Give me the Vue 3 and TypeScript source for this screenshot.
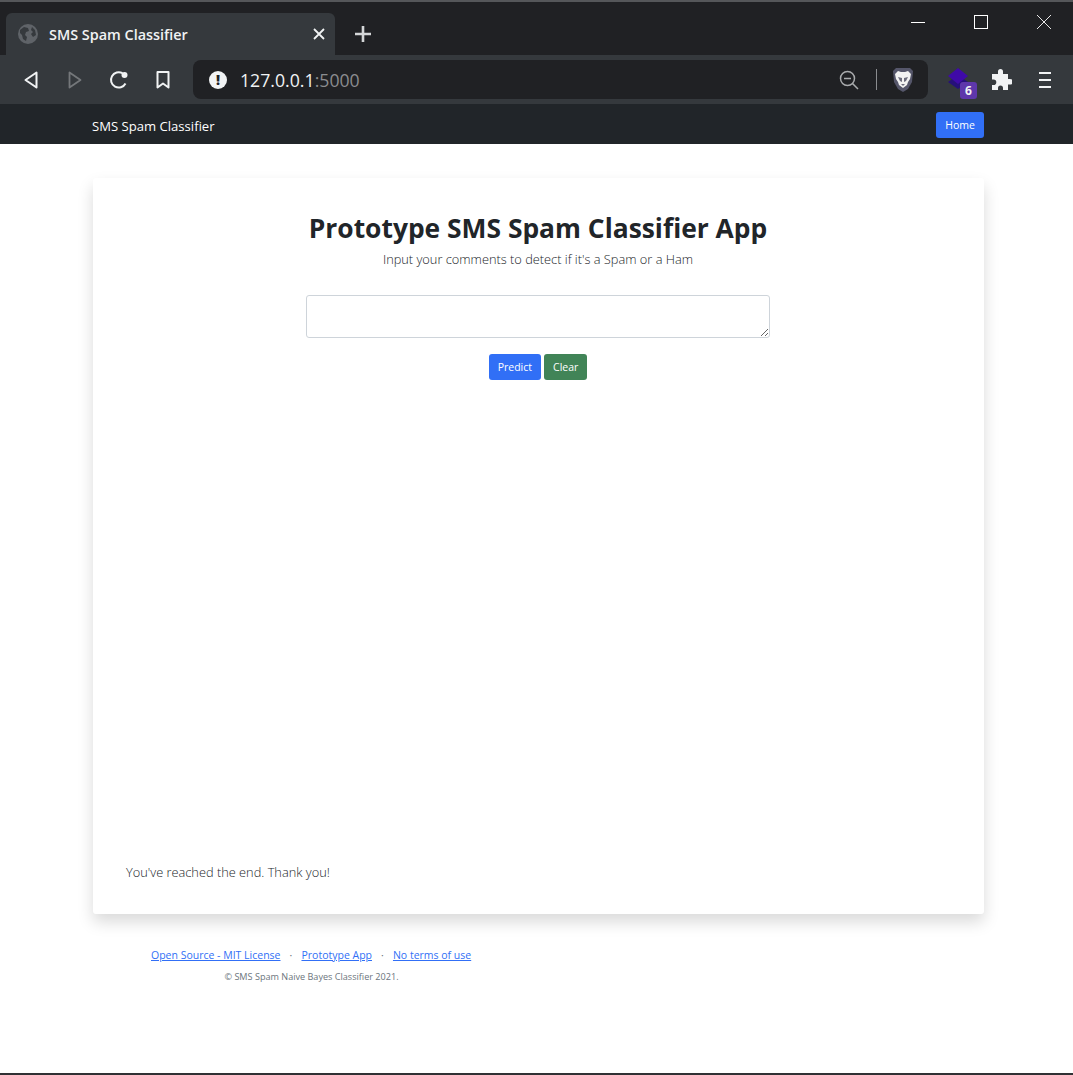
<template>
  <div class="page">
    <!-- browser chrome -->
    <div class="tab-strip">
      <div class="tab">
        <svg class="globe" viewBox="0 0 20 20" width="20" height="20">
          <circle cx="10" cy="10" r="10" fill="#5f6368" />
          <path d="M2 6l4-3 4 1 1 3-3 1-1 3 2 2-1 4-3-2-1-4-2-2zM14 3l3 3 1 5-3 2-2-3 2-2-2-2z" fill="#35393d" />
        </svg>
        <span class="tab-title">SMS Spam Classifier</span>
        <svg class="tab-close" viewBox="0 0 12 12" width="12" height="12">
          <path d="M1 1l10 10M11 1L1 11" stroke="#f1f3f4" stroke-width="1.8" />
        </svg>
      </div>
      <svg class="new-tab" viewBox="0 0 16 16" width="16" height="16">
        <path d="M8 0v16M0 8h16" stroke="#d4d6d8" stroke-width="2.6" />
      </svg>
      <div class="win-controls">
        <svg viewBox="0 0 14 14" width="14" height="14"><path d="M0 7.500h14" stroke="#fff" stroke-width="1" /></svg>
        <svg viewBox="0 0 14 14" width="14" height="14"><rect x=".5" y=".5" width="13" height="13" fill="none" stroke="#fff" /></svg>
        <svg viewBox="0 0 14 14" width="14" height="14"><path d="M0 0l14 14M14 0L0 14" stroke="#e8e8e8" stroke-width="1" /></svg>
      </div>
    </div>

    <div class="toolbar">
      <div class="nav-icons">
        <svg viewBox="0 0 14 18" width="14" height="18"><path d="M12.500 1.500v15L1.500 9z" fill="none" stroke="#f1f3f4" stroke-width="2" stroke-linejoin="round" /></svg>
        <svg class="forward" viewBox="0 0 14 18" width="14" height="18"><path d="M1.500 1.500v15l11-7.500z" fill="none" stroke="#74777a" stroke-width="1.800" stroke-linejoin="round" /></svg>
        <svg viewBox="0 0 20 20" width="20" height="20">
          <path d="M16.500 13.500A7.700 7.700 0 1 1 13.500 3.200" fill="none" stroke="#f1f3f4" stroke-width="2" />
          <circle cx="15.500" cy="5" r="3" fill="#f1f3f4" />
        </svg>
        <svg viewBox="0 0 14 18" width="14" height="18"><path d="M1.500 1h11v15.500L7 12.500l-5.500 4z" fill="none" stroke="#f1f3f4" stroke-width="2" stroke-linejoin="round" /></svg>
      </div>
      <div class="omnibox">
        <span class="info-badge">!</span>
        <span class="url">127.0.0.1<span class="port">:5000</span></span>
        <svg class="zoom-out" viewBox="0 0 20 20" width="20" height="20">
          <circle cx="8.500" cy="8.500" r="7" fill="none" stroke="#a9abad" stroke-width="1.500" />
          <path d="M5 8.500h7M13.500 13.500l5.500 5.500" stroke="#a9abad" stroke-width="1.500" />
        </svg>
        <span class="omni-sep"></span>
        <svg class="shield" viewBox="0 0 22 26" width="22" height="26">
          <path d="M4 1h14l3 3-1 11-4 7-5 3-5-3-4-7L1 4z" fill="#55566a" />
          <path d="M6 4l3 1h4l3-1 3 3-1 5-2 3-1 3-4 3-4-3-1-3-2-3-1-5z" fill="#f2f2f2" />
          <path d="M6 10l4 1v4l-2-1zM16 10l-4 1v4l2-1zM9 17h4l-2 2z" fill="#6c6c7c" />
        </svg>
      </div>
      <div class="ext-icons">
        <div class="stack-ext">
          <svg viewBox="0 0 24 24" width="24" height="24">
            <path d="M12 8l10 7-10 7-10-7z" fill="#26107a" />
            <path d="M12 1l10 8-10 8-10-8z" fill="#3f0aa8" />
          </svg>
          <span class="ext-badge">6</span>
        </div>
        <svg viewBox="0 0 22 22" width="22" height="22">
          <path d="M8 2.500a2.500 2.500 0 0 1 5 0V5h5v5h2a2.800 2.800 0 0 1 0 5.600h-2V21h-5v-2a2.500 2.500 0 0 0-5 0v2H2v-5h1.500a2.800 2.800 0 0 0 0-5.600H2V5h6z" fill="#f1f3f4" />
        </svg>
        <svg class="menu-icon" viewBox="0 0 14 18" width="14" height="18">
          <path d="M1 2h12M1 9h12M1 16h12" stroke="#f1f3f4" stroke-width="2" />
        </svg>
      </div>
    </div>

    <!-- page navbar -->
    <nav class="navbar">
      <span class="brand">SMS Spam Classifier</span>
      <a class="btn btn-blue nav-btn">Home</a>
    </nav>

    <main class="content">
      <section class="card">
        <div class="intro">
          <h1>Prototype SMS Spam Classifier App</h1>
          <p class="lead">Input your comments to detect if it's a Spam or a Ham</p>
          <textarea class="comment-box"></textarea>
          <div class="actions">
            <button class="btn btn-blue">Predict</button>
            <button class="btn btn-green">Clear</button>
          </div>
        </div>
        <p class="thanks">You've reached the end. Thank you!</p>
      </section>
    </main>

    <footer class="site-footer">
      <div class="footer-inner">
        <div class="links">
          <a v-for="(link, i) in links" :key="link">
            <span class="link-text">{{ link }}</span>
            <span v-if="i < links.length - 1" class="dot">·</span>
          </a>
        </div>
        <div class="copy">© SMS Spam Naive Bayes Classifier 2021.</div>
      </div>
    </footer>
    <div class="bottom-line"></div>
  </div>
</template>

<script setup lang="ts">
const links: string[] = ["Open Source - MIT License", "Prototype App", "No terms of use"];
</script>

<style>
html,
body {
  margin: 0;
  background: #fff;
}
</style>

<style scoped>
.page {
  width: 1073px;
  height: 1075px;
  display: flex;
  flex-direction: column;
  font-family: "Open Sans", "Noto Sans", "Liberation Sans", sans-serif;
  color: #212529;
  overflow: hidden;
}

.tab-strip {
  height: 53px;
  flex: none;
  display: flex;
  align-items: flex-end;
  background: #202124;
  border-top: 2px solid #55575a;
  padding-left: 6px;
}

.tab {
  width: 329px;
  height: 42px;
  background: #35393d;
  border-radius: 6px 6px 0 0;
  display: flex;
  align-items: center;
  padding: 0 10px 0 12px;
  box-sizing: border-box;
}

.tab-title {
  margin-left: 11px;
  font-size: 14.400px;
  font-weight: 600;
  color: #f1f3f4;
  flex: 1;
}

.new-tab {
  align-self: flex-end;
  margin: 0 0 13px 20px;
}

.win-controls {
  margin-left: auto;
  align-self: flex-start;
  display: flex;
  gap: 49px;
  padding: 13px 22px 0 0;
}

.toolbar {
  height: 49px;
  flex: none;
  display: flex;
  align-items: center;
  background: #35393d;
}

.nav-icons {
  display: flex;
  align-items: center;
  gap: 27px;
  padding-left: 24px;
  width: 193px;
  box-sizing: border-box;
}

.forward {
  margin-left: 3px;
}

.omnibox {
  width: 735px;
  height: 39px;
  background: #202124;
  border-radius: 8px;
  display: flex;
  align-items: center;
  padding: 0 14px 0 16px;
  box-sizing: border-box;
}

.info-badge {
  width: 18px;
  height: 18px;
  border-radius: 50%;
  background: #f1f3f4;
  color: #202124;
  font-size: 14px;
  font-weight: 800;
  line-height: 18px;
  text-align: center;
}

.url {
  margin-left: 13px;
  font-size: 17.700px;
  color: #f1f3f4;
  flex: 1;
}

.port {
  color: #8a8c8f;
}

.omni-sep {
  width: 1px;
  height: 21px;
  background: #8a8c8f;
  margin: 0 15px 0 17px;
}

.ext-icons {
  display: flex;
  align-items: center;
  padding-left: 18px;
  gap: 19px;
}

.stack-ext {
  position: relative;
  width: 25px;
  height: 26px;
}

.ext-badge {
  position: absolute;
  right: -6px;
  bottom: -6px;
  width: 17px;
  height: 17px;
  border-radius: 3px;
  background: #5e37ab;
  color: #f1f3f4;
  font-size: 12px;
  font-weight: 700;
  line-height: 17px;
  text-align: center;
}

.menu-icon {
  margin-left: 7px;
}

.navbar {
  height: 40px;
  flex: none;
  display: flex;
  align-items: center;
  justify-content: space-between;
  background: #212529;
  padding: 2px 89px 0 92px;
  box-sizing: border-box;
}

.brand {
  font-size: 13.100px;
  color: #fff;
  padding-top: 2px;
}

.btn {
  display: inline-block;
  border: none;
  border-radius: 3px;
  font-family: inherit;
  font-size: 10.500px;
  color: #fff;
  height: 26px;
  line-height: 26px;
  padding: 0 9px;
  box-sizing: border-box;
}

.nav-btn {
  margin-top: -1px;
}

.btn-blue {
  background: #316ff6;
}

.btn-green {
  background: #418457;
}

.content {
  padding: 34px 89px 0 93px;
  flex: none;
}

.card {
  height: 736px;
  background: #fff;
  border-radius: 3px;
  box-shadow: 0 8px 16px rgba(0, 0, 0, 0.15);
  display: flex;
  flex-direction: column;
  justify-content: space-between;
  box-sizing: border-box;
  padding: 32px 34px 32px 33px;
}

.intro {
  display: flex;
  flex-direction: column;
  align-items: center;
}

h1 {
  margin: 0;
  font-size: 26.400px;
  line-height: 36px;
  font-weight: 700;
}

.lead {
  margin: 4px 0 0;
  font-size: 12.800px;
  line-height: 18px;
  font-weight: 300;
}

.comment-box {
  display: block;
  width: 464px;
  height: 43px;
  margin: 27px 0 0;
  border: 1px solid #ced4da;
  border-radius: 3px;
  box-sizing: border-box;
  background: #fff;
}

.actions {
  display: flex;
  gap: 3px;
  margin-top: 16px;
}

.thanks {
  margin: 0;
  font-size: 12.800px;
  line-height: 20px;
  font-weight: 300;
}

.site-footer {
  flex: 1;
  padding: 33px 0 0 151px;
}

.footer-inner {
  width: 321px;
}

.links {
  font-size: 10.500px;
  line-height: 16px;
  white-space: nowrap;
  color: #316ff6;
}

.link-text {
  text-decoration: underline;
}

.dot {
  margin: 0 9.100px;
  color: #6c757d;
}

.copy {
  margin-top: 8px;
  font-size: 9.100px;
  line-height: 12px;
  color: #6c757d;
  text-align: center;
}

.bottom-line {
  height: 2px;
  background: #303134;
  flex: none;
}
</style>
